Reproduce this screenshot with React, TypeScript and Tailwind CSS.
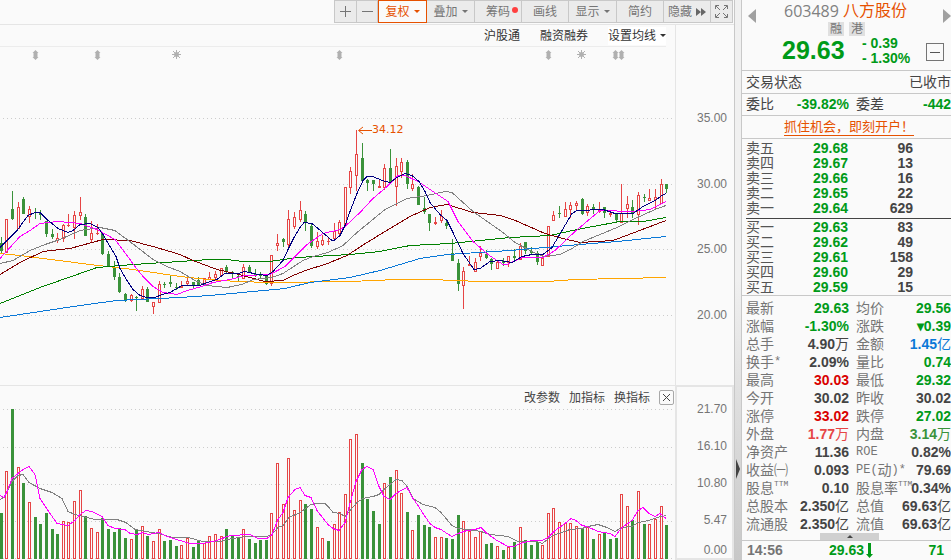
import React from "react";

type Kind = "r" | "g";
type Candle = [Kind, number, number, number, number];

const RED = "#e64545";
const GREEN = "#3a923a";

// kind, high, body top, body bottom, low
const candles: Candle[] = [
  ["g", 237, 243, 251, 253], ["r", 219, 219, 253, 253], ["g", 191, 209, 219, 220], ["r", 202, 207, 229, 229],
  ["g", 197, 199, 214, 214], ["r", 206, 209, 217, 223], ["g", 208, 212, 213, 219], ["g", 210, 213, 215, 220],
  ["g", 221, 221, 234, 237], ["g", 229, 234, 237, 239], ["r", 233, 238, 241, 243], ["r", 224, 225, 239, 242],
  ["r", 214, 225, 226, 227], ["r", 211, 215, 228, 239], ["r", 197, 212, 216, 220], ["g", 214, 217, 236, 236],
  ["r", 221, 233, 240, 243], ["r", 224, 233, 234, 235], ["g", 232, 233, 254, 255], ["g", 251, 254, 266, 266],
  ["g", 261, 267, 277, 280], ["g", 273, 277, 292, 293], ["g", 293, 294, 301, 302], ["r", 294, 295, 301, 302],
  ["g", 296, 297, 298, 311], ["r", 286, 289, 299, 299], ["g", 287, 289, 302, 302], ["r", 302, 302, 307, 314],
  ["r", 281, 284, 303, 303], ["g", 282, 284, 285, 288], ["g", 276, 282, 284, 287], ["g", 283, 287, 288, 290],
  ["r", 281, 286, 288, 288], ["r", 275, 281, 284, 286], ["g", 282, 282, 286, 288], ["g", 277, 280, 285, 285],
  ["r", 278, 278, 286, 286], ["r", 272, 277, 280, 280], ["r", 271, 274, 278, 280], ["r", 268, 268, 276, 276],
  ["g", 265, 267, 271, 274], ["g", 271, 272, 273, 279], ["g", 273, 276, 277, 281], ["r", 264, 267, 279, 279],
  ["g", 265, 267, 272, 272], ["g", 269, 274, 275, 277], ["g", 272, 275, 276, 278], ["g", 276, 276, 284, 285],
  ["r", 255, 255, 284, 286], ["r", 234, 243, 246, 251], ["g", 238, 239, 242, 247], ["r", 210, 219, 245, 249],
  ["r", 212, 217, 227, 229], ["r", 201, 210, 220, 222], ["g", 211, 214, 222, 231], ["g", 224, 226, 246, 248],
  ["r", 232, 241, 247, 249], ["r", 235, 240, 245, 246], ["r", 238, 241, 242, 245], ["r", 223, 231, 239, 241],
  ["r", 220, 222, 234, 236], ["r", 187, 187, 225, 225], ["r", 167, 171, 188, 194], ["r", 130, 154, 176, 191],
  ["g", 143, 158, 181, 182], ["g", 179, 180, 183, 191], ["g", 180, 180, 184, 191], ["r", 180, 186, 188, 188],
  ["r", 164, 168, 188, 190], ["g", 149, 168, 183, 184], ["r", 158, 166, 187, 206], ["r", 158, 162, 172, 178],
  ["g", 160, 162, 184, 189], ["r", 174, 184, 189, 191], ["g", 186, 187, 205, 205], ["g", 197, 208, 212, 214],
  ["g", 214, 214, 223, 231], ["r", 217, 222, 224, 225], ["r", 210, 216, 221, 223], ["g", 220, 223, 226, 229],
  ["g", 239, 253, 261, 261], ["g", 259, 263, 284, 291], ["r", 267, 271, 286, 309], ["r", 256, 264, 266, 266],
  ["r", 258, 262, 272, 272], ["r", 246, 253, 257, 261], ["g", 250, 254, 258, 259], ["g", 258, 259, 264, 270],
  ["r", 260, 262, 269, 269], ["g", 258, 261, 263, 266], ["r", 256, 256, 263, 267], ["g", 249, 256, 258, 261],
  ["r", 243, 246, 260, 260], ["g", 242, 242, 251, 254], ["g", 247, 251, 253, 254], ["g", 251, 253, 262, 265],
  ["r", 255, 258, 266, 266], ["r", 226, 226, 257, 257], ["r", 211, 215, 221, 221], ["g", 206, 213, 214, 218],
  ["r", 202, 209, 217, 217], ["r", 202, 205, 210, 218], ["r", 201, 203, 206, 210], ["g", 198, 199, 214, 215],
  ["r", 204, 206, 213, 216], ["g", 204, 207, 209, 214], ["r", 202, 209, 212, 213], ["g", 207, 207, 213, 218],
  ["r", 211, 213, 215, 217], ["g", 213, 214, 220, 222], ["r", 184, 213, 223, 223], ["r", 196, 204, 209, 218],
  ["g", 200, 207, 213, 218], ["r", 192, 195, 215, 225], ["g", 194, 197, 198, 202], ["r", 189, 198, 201, 201],
  ["r", 189, 197, 200, 210], ["r", 179, 184, 204, 204], ["g", 184, 184, 189, 193],
];

const volumeTops = [
  513, 471, 409, 467, 483, 502, 517, 524, 513, 529, 534, 521, 522, 501, 490, 516, 528, 532, 518, 529,
  532, 528, 538, 539, 530, 526, 536, 541, 529, 541, 540, 546, 545, 538, 547, 541, 543, 536, 534, 536,
  529, 535, 538, 529, 539, 543, 540, 540, 513, 463, 504, 458, 510, 500, 504, 509, 527, 538, 541, 524,
  512, 494, 439, 434, 463, 499, 511, 524, 483, 477, 470, 493, 512, 530, 515, 525, 527, 537, 537, 538,
  539, 515, 521, 531, 537, 531, 544, 543, 546, 550, 547, 542, 527, 540, 545, 542, 545, 513, 508, 522,
  523, 523, 526, 529, 527, 539, 534, 532, 539, 538, 494, 506, 520, 491, 524, 524, 519, 506, 525,
];

// Days on which the volume bar is coloured by the previous close, not by the candle body
const volumeKind: Record<number, Kind> = { 10: "g", 50: "r", 58: "g", 67: "g", 99: "r", 106: "r", 108: "g" };

const priceLines: { color: string; points: string }[] = [
  { color: "#ffa500", points: "0,253 20,255 90,264 133,269 180,276 207,279 237,281 270,282 350,281 397,279 430,279 480,281 547,281 575,279 666,277" },
  { color: "#0a78d7", points: "0,317 80,305 117,300 180,297 210,295 285,288 310,282 350,277 380,270 420,258 447,254 510,250 580,244 617,241 666,236" },
  { color: "#008000", points: "0,303 40,287 97,267 133,264 180,261 210,259 227,259 243,261 270,261 297,257 350,254 380,251 410,245 450,243 510,237 550,235 577,229 620,221 643,221 666,217" },
  { color: "#800000", points: "0,274 20,262 43,251 70,248 103,239 130,240 153,246 180,254 193,260 217,269 235,273 265,281 283,280 293,275 308,269 325,264 347,255 367,242 390,228 410,216 430,207 447,204 473,212 500,215 513,219 545,233 563,238 580,242 613,240 637,231 666,220" },
  { color: "#808080", points: "0,263 13,260 30,250 45,244 60,239 80,230 100,227 115,230 135,245 153,259 167,266 180,271 195,280 207,285 227,287 242,284 253,279 272,277 283,273 303,260 313,256 328,252 343,245 357,232 385,209 407,198 427,195 445,191 452,192 473,211 503,232 515,242 532,251 543,256 560,254 572,248 583,241 600,234 617,227 633,219 655,209 666,205" },
  { color: "#ff00ff", points: "0,258 20,236 30,230 40,223 58,221 80,223 97,229 115,239 127,255 135,266 143,276 153,286 163,292 177,294 187,290 202,286 213,282 230,279 245,275 270,274 285,266 307,244 323,233 340,229 345,226 360,212 373,198 387,186 398,175 405,175 418,181 433,191 448,201 458,221 473,241 488,254 503,264 507,264 522,257 543,257 555,250 575,231 600,210 633,211 650,209 666,201" },
  { color: "#000080", points: "0,247 17,230 28,215 35,212 40,212 47,219 52,223 58,228 68,232 73,230 80,224 90,223 98,227 103,234 110,246 116,256 120,268 127,280 133,289 140,295 147,297 155,297 162,294 170,292 182,285 200,285 207,282 217,279 225,273 238,273 245,271 258,274 267,275 273,271 283,260 288,249 294,237 300,227 304,222 312,223 318,228 325,234 332,240 334,240 340,235 345,225 350,211 357,193 363,180 367,176 373,176 382,180 390,182 397,177 405,173 412,175 419,181 425,191 430,202 440,214 447,220 453,232 463,253 474,269 480,268 490,261 500,260 512,262 522,256 532,254 543,254 552,247 562,230 572,213 577,210 603,209 615,213 633,213 643,206 655,200 662,195 666,193" },
];

const volumeLines: { color: string; points: string }[] = [
  { color: "#808080", points: "0,499 5,496 12,481 18,475 23,474 29,482 40,488 52,492 62,498 68,511 75,514 95,519 117,519 126,522 135,529 158,533 173,537 188,537 203,541 220,541 232,538 247,536 267,536 272,534 278,527 283,525 289,517 300,512 311,504 318,503 325,503 329,507 333,512 340,513 345,516 357,502 363,498 373,496 379,494 384,489 396,479 402,480 407,486 413,498 423,504 435,507 441,512 452,525 458,528 467,529 481,531 490,534 508,536 518,541 537,541 542,543 553,535 570,529 582,528 588,526 598,524 607,527 615,531 622,527 632,526 638,522 649,520 657,517 666,515" },
  { color: "#ff00ff", points: "0,495 4,497 7,491 12,478 18,473 23,469 29,466 35,474 40,498 48,510 57,523 68,525 75,520 80,514 86,510 92,511 102,516 108,525 115,528 125,529 130,533 137,534 143,532 148,534 159,532 167,536 180,540 190,543 203,543 217,540 230,535 250,534 258,538 267,538 272,534 278,519 283,512 288,497 295,489 300,487 305,495 311,497 317,510 328,524 333,528 339,530 345,522 350,503 356,481 362,469 367,466 373,469 379,486 384,496 390,499 396,493 401,490 407,487 413,498 418,505 425,516 430,523 435,527 441,529 447,533 452,536 458,533 467,530 475,529 481,527 487,533 497,540 508,546 514,546 520,543 532,540 542,540 548,537 555,530 565,523 571,518 576,520 582,525 587,526 598,531 610,533 615,536 622,527 632,520 638,510 643,507 649,513 655,516 660,513 666,518" },
];

const dayX = (i: number) => Math.floor(1.28 + 5.64 * i);

function GridLine({ y }: { y: number }) {
  return <line x1={3} x2={675} y1={y + 0.5} y2={y + 0.5} stroke="#cccccc" strokeDasharray="1 3" />;
}

function UpDownMark({ x }: { x: number }) {
  return <path d={`M${x + 0.5} 50l3 3h-1v4h1l-3 3l-3-3h1v-4h-1z`} fill="#b0b0b0" />;
}

function SunMark({ x }: { x: number }) {
  return (
    <g stroke="#b0b0b0" fill="#b0b0b0">
      <circle cx={x + 0.5} cy={54.5} r={2} />
      <path d={`M${x + 0.5} 50v9M${x - 4} 54.5h9M${x - 3} 51l7 7M${x + 4} 51l-7 7`} />
    </g>
  );
}

function PriceChart() {
  return (
    <svg viewBox="0 47 675 338" preserveAspectRatio="none" className="block h-[338px] w-full" role="img" aria-label="K线">
      {[35, 97, 339, 548, 615, 621].map((x) => <UpDownMark key={x} x={x} />)}
      {[176, 581].map((x) => <SunMark key={x} x={x} />)}
      <g shapeRendering="crispEdges" fill="none">
        {[118, 184, 249, 315].map((y) => <GridLine key={y} y={y} />)}
        {candles.map(([kind, high, top, bottom, low], i) => {
          const x = dayX(i);
          const h = Math.max(bottom - top, 1);
          return kind === "g" ? (
            <g key={i} fill={GREEN}>
              <rect x={x} y={high} width={1} height={low - high} />
              <rect x={x - 1} y={top} width={3} height={h} />
            </g>
          ) : (
            <g key={i} fill={RED}>
              <rect x={x} y={high} width={1} height={top - high} />
              <rect x={x} y={bottom} width={1} height={low - bottom} />
              <rect x={x - 1} y={top} width={3} height={h} />
              {h > 2 && <rect x={x} y={top + 1} width={1} height={h - 2} fill="#fafafa" />}
            </g>
          );
        })}
        {priceLines.map((l) => <polyline key={l.color} points={l.points} stroke={l.color} transform="translate(0 0.5)" />)}
      </g>
      <path d="M359 130.5h13M363 127l-4.500 3.500l4.500 3.500" fill="none" stroke="#e65100" />
      <text x={372} y={133} fill="#e65100" fontSize={11} className="font-['DejaVu_Sans',sans-serif]">34.12</text>
    </svg>
  );
}

function VolumeChart() {
  return (
    <svg viewBox="0 409 675 151" preserveAspectRatio="none" className="block h-[151px] w-full" role="img" aria-label="成交量">
      <g shapeRendering="crispEdges" fill="none">
        {[409, 447, 484, 521, 558].map((y) => <GridLine key={y} y={y} />)}
        {volumeTops.map((top, i) => {
          const kind = volumeKind[i] ?? candles[i][0];
          const x = dayX(i) - 1;
          return (
            <g key={i}>
              <rect x={x} y={top} width={3} height={559 - top} fill={kind === "g" ? GREEN : RED} />
              {kind === "r" && <rect x={x + 1} y={top + 1} width={1} height={557 - top} fill="#fafafa" />}
            </g>
          );
        })}
        {volumeLines.map((l) => <polyline key={l.color} points={l.points} stroke={l.color} transform="translate(0 0.5)" />)}
      </g>
    </svg>
  );
}

function Caret() {
  return <span className="h-0 w-0 border-x-[3px] border-t-[3px] border-x-transparent border-t-current" />;
}

function Tool({ label, width, caret, dot, active, children }: {
  label: string; width: string; caret?: boolean; dot?: boolean; active?: boolean; children?: React.ReactNode;
}) {
  const look = active
    ? "border border-[#e65100] bg-[#fafafa] text-[#e65100]"
    : "border-y border-r border-[#c8c8c8] bg-[#ebebeb] text-[#757575]";
  return (
    <button type="button" aria-label={label} className={`relative flex h-[23px] items-center justify-center gap-1 ${width} ${look}`}>
      {children ?? <span>{label}</span>}
      {caret && <Caret />}
      {dot && <span className="absolute top-[6px] right-[3px] h-[6px] w-[6px] rounded-full bg-[#ff4040]" />}
    </button>
  );
}

function Toolbar() {
  return (
    <div className="flex h-6 items-start justify-end pr-px text-[12px]">
      <div className="flex border-l border-[#c8c8c8]">
        <Tool label="放大" width="w-[22px]">
          <svg width="11" height="11" shapeRendering="crispEdges"><path d="M5.500 0v11M0 5.500h11" stroke="#757575" /></svg>
        </Tool>
        <Tool label="缩小" width="w-[21px]">
          <svg width="11" height="11" shapeRendering="crispEdges"><path d="M0 5.500h11" stroke="#757575" /></svg>
        </Tool>
        <Tool label="复权" width="w-[49px]" caret active />
        <Tool label="叠加" width="w-[48px]" caret />
        <Tool label="筹码" width="w-[47px]" dot />
        <Tool label="画线" width="w-[47px]" />
        <Tool label="显示" width="w-[48px]" caret />
        <Tool label="简约" width="w-[47px]" />
        <Tool label="隐藏" width="w-[47px]">
          <span>隐藏</span>
          <svg width="10" height="8" fill="#666666"><path d="M0 0l5 4l-5 4zM5 0l5 4l-5 4z" /></svg>
        </Tool>
        <Tool label="全屏" width="w-[22px]">
          <svg width="13" height="13" fill="none" stroke="#757575">
            <path d="M.5 4V.5H4M9 .5h3.500V4M12.500 9v3.500H9M4 12.500H.5V9M1 1l4 4M12 1L8 5M12 12L8 8M1 12l4-4" />
          </svg>
        </Tool>
      </div>
    </div>
  );
}

type Tone = "green" | "red" | "dark" | "blue" | "softRed" | "softGreen";
const tones: Record<Tone, string> = {
  green: "text-[#009a18]",
  red: "text-[#d90000]",
  dark: "text-[#444444]",
  blue: "text-[#0a78d7]",
  softRed: "text-[#e64545]",
  softGreen: "text-[#3a923a]",
};

const asks = [["卖五", "29.68", "96"], ["卖四", "29.67", "13"], ["卖三", "29.66", "16"], ["卖二", "29.65", "22"], ["卖一", "29.64", "629"]];
const bids = [["买一", "29.63", "83"], ["买二", "29.62", "49"], ["买三", "29.61", "158"], ["买四", "29.60", "29"], ["买五", "29.59", "15"]];

type Cell = { label: React.ReactNode; value: string; unit?: string; tone: Tone };
const ttm = <span className="self-start font-['Liberation_Mono',monospace] text-[8px] leading-[9px]">TTM</span>;
const latin = (text: string) => <span className="font-['Liberation_Mono',monospace] text-[12px]">{text}</span>;

const details: [Cell, Cell][] = [
  [{ label: "最新", value: "29.63", tone: "green" }, { label: "均价", value: "29.56", tone: "green" }],
  [{ label: "涨幅", value: "-1.30%", tone: "green" }, { label: "涨跌", value: "▾0.39", tone: "green" }],
  [{ label: "总手", value: "4.90", unit: "万", tone: "dark" }, { label: "金额", value: "1.45", unit: "亿", tone: "blue" }],
  [{ label: <>换手{latin("*")}</>, value: "2.09%", tone: "dark" }, { label: "量比", value: "0.74", tone: "green" }],
  [{ label: "最高", value: "30.03", tone: "red" }, { label: "最低", value: "29.32", tone: "green" }],
  [{ label: "今开", value: "30.02", tone: "dark" }, { label: "昨收", value: "30.02", tone: "dark" }],
  [{ label: "涨停", value: "33.02", tone: "red" }, { label: "跌停", value: "27.02", tone: "green" }],
  [{ label: "外盘", value: "1.77", unit: "万", tone: "softRed" }, { label: "内盘", value: "3.14", unit: "万", tone: "softGreen" }],
  [{ label: "净资产", value: "11.36", tone: "dark" }, { label: latin("ROE"), value: "0.82%", tone: "dark" }],
  [{ label: "收益㈠", value: "0.093", tone: "dark" }, { label: <>{latin("PE(")}动{latin(")*")}</>, value: "79.69", tone: "dark" }],
  [{ label: <>股息{ttm}</>, value: "0.10", tone: "dark" }, { label: <>股息率{ttm}</>, value: "0.34%", tone: "dark" }],
  [{ label: "总股本", value: "2.350", unit: "亿", tone: "dark" }, { label: "总值", value: "69.63", unit: "亿", tone: "dark" }],
  [{ label: "流通股", value: "2.350", unit: "亿", tone: "dark" }, { label: "流值", value: "69.63", unit: "亿", tone: "dark" }],
];

function QuoteRows({ rows }: { rows: string[][] }) {
  return (
    <tbody>
      {rows.map(([name, price, size]) => (
        <tr key={name} className="h-[15px] leading-[15px]">
          <th scope="row" className="w-[42px] p-0 text-left font-normal text-[#555555]">{name}</th>
          <td className="w-[60px] p-0 text-right font-bold text-[#009a18]">{price}</td>
          <td className="w-[65px] p-0 text-right font-bold text-[#444444]">{size}</td>
          <td className="p-0" />
        </tr>
      ))}
    </tbody>
  );
}

function DetailCells({ cell, indent }: { cell: Cell; indent?: boolean }) {
  return (
    <>
      <th scope="row" className={`w-[48px] p-0 text-left font-normal text-[#757575] ${indent ? "pl-[7px]" : ""}`}>
        <div className="flex h-[18px] items-center">{cell.label}</div>
      </th>
      <td className={`p-0 font-bold ${indent ? "" : "w-[55px]"} ${tones[cell.tone]}`}>
        <div className="flex h-[18px] items-center justify-end">
          {cell.value}
          {cell.unit && <span className="font-normal">{cell.unit}</span>}
        </div>
      </td>
    </>
  );
}

function QuotePanel() {
  return (
    <aside className="flex w-[210px] shrink-0 flex-col overflow-hidden border-l border-[#c8c8c8] bg-[#fafafa] text-[14px] whitespace-nowrap">
      <header className="flex h-[71px] items-start justify-between border-b border-[#c8c8c8] pl-[6px]">
        <button type="button" aria-label="上一只" className="mt-[9px] h-0 w-0 border-y-[7px] border-r-[8px] border-y-transparent border-r-[#a0a0a0]" />
        <div className="flex flex-1 flex-col pl-[26px]">
          <h1 className="flex h-[22px] items-center gap-1 pl-[2px] text-[16px]">
            <span className="font-['Open_Sans',sans-serif] text-[#808080]">603489</span>
            <span className="text-[#e65100]">八方股份</span>
          </h1>
          <div className="flex gap-[5px] pl-[46px] text-[12px] leading-[14px] text-[#757575]">
            <span className="w-4 bg-[#e0e0e0] text-center">融</span>
            <span className="w-4 bg-[#e0e0e0] text-center">港</span>
          </div>
          <div className="flex text-[#009a18]">
            <strong className="w-[80px] text-[25px] leading-[28px]">29.63</strong>
            <div className="flex flex-col font-bold leading-[15px]">
              <span>- 0.39</span>
              <span>- 1.30%</span>
            </div>
          </div>
        </div>
        <div className="flex w-[25px] flex-col items-end gap-5">
          <button type="button" aria-label="下一只" className="mt-[9px] h-0 w-0 border-y-[7px] border-l-[8px] border-y-transparent border-l-[#a0a0a0]" />
          <button type="button" aria-label="移出自选" className="mr-[7px] flex h-[18px] w-[18px] items-center justify-center border border-[#757575]">
            <span className="h-px w-[10px] bg-[#555555]" />
          </button>
        </div>
      </header>
      <div className="flex h-[23px] items-center justify-between border-b border-[#c8c8c8] pl-1 text-[#444444]">
        <span>交易状态</span>
        <span>已收市</span>
      </div>
      <div className="flex h-[22px] items-center border-b border-[#c8c8c8] pl-1 text-[#444444]">
        <span>委比</span>
        <span className="w-[75px] text-right font-bold text-[#009a18]">-39.82%</span>
        <span className="pl-[7px]">委差</span>
        <span className="flex-1 text-right font-bold text-[#009a18]">-442</span>
      </div>
      <div className="flex h-[23px] items-center border-b border-[#c8c8c8] pl-[42px]">
        <a href="#open" className="border-b border-[#e65100] text-[13px] leading-4 text-[#e65100]">抓住机会，即刻开户！</a>
      </div>
      <div className="border-b border-[#c8c8c8] pl-1">
        <table className="mt-[2px] w-full table-fixed border-collapse"><QuoteRows rows={asks} /></table>
        <div className="mt-[2px] h-px bg-[#444444]" />
        <table className="mt-px w-full table-fixed border-collapse"><QuoteRows rows={bids} /></table>
      </div>
      <table className="mt-[3px] ml-1 w-[205px] table-fixed border-collapse">
        <tbody>
          {details.map(([a, b], i) => (
            <tr key={i} className="h-[18px] leading-[18px]">
              <DetailCells cell={a} />
              <DetailCells cell={b} indent />
            </tr>
          ))}
        </tbody>
      </table>
      <button type="button" aria-label="收起" className="ml-[78px] flex h-[7px] w-[59px] items-center justify-center bg-[#d0d0d0]">
        <span className="h-0 w-0 border-x-[3px] border-b-[3px] border-x-transparent border-b-[#444444]" />
      </button>
      <div className="flex h-[19px] items-center border-t border-[#c8c8c8] pr-[7px] pl-[5px] leading-4 font-bold">
        <span className="w-[82px] text-[#757575]">14:56</span>
        <span className="flex flex-1 items-center gap-[2px] text-[#009a18]">
          29.63
          <svg width="7" height="15" fill="#009a18"><path d="M2 0h3v11h2l-3.500 4L0 11h2z" /></svg>
        </span>
        <span className="text-[#009a18]">71</span>
      </div>
    </aside>
  );
}

export default function App() {
  return (
    <div className="flex min-h-screen overflow-hidden bg-[#fafafa] font-['Liberation_Sans','Noto_Sans_CJK_SC',sans-serif]">
      <main className="flex min-w-0 flex-1 flex-col border-r border-[#c8c8c8]">
        <Toolbar />
        <div className="flex border-t border-[#e5e5e5]">
          <section className="min-w-0 flex-1">
            <div className="mr-[9px] flex h-[22px] items-center justify-end gap-5 border-b border-[#ececec] text-[12px] text-[#333333]">
              <button type="button">沪股通</button>
              <button type="button">融资融券</button>
              <button type="button" className="flex items-center gap-1 bg-white"><span>设置均线</span><Caret /></button>
            </div>
            <PriceChart />
          </section>
          <div className="flex w-[59px] flex-col items-end justify-between border-l border-[#e5e5e5] pt-[85px] pr-[7px] pb-[62px] text-[12px] leading-4 text-[#757575]">
            <span>35.00</span>
            <span>30.00</span>
            <span>25.00</span>
            <span>20.00</span>
          </div>
        </div>
        <div className="flex">
          <section className="min-w-0 flex-1 border-t border-[#e5e5e5]">
            <div className="flex h-[23px] items-center justify-end gap-[9px] pr-px text-[12px] text-[#444444]">
              <button type="button">改参数</button>
              <button type="button">加指标</button>
              <button type="button">换指标</button>
              <button type="button" aria-label="关闭" className="flex h-[15px] w-[15px] items-center justify-center rounded-[2px] border border-[#a8a8a8]">
                <svg width="9" height="9" stroke="#444444"><path d="M1 1l7 7M8 1l-7 7" /></svg>
              </button>
            </div>
            <VolumeChart />
          </section>
          <div className="flex w-[59px] flex-col items-end gap-[21px] border-2 border-[#e5e5e5] pt-[14px] pr-[5px] text-[12px] leading-4 text-[#757575]">
            <span>21.70</span>
            <span>16.10</span>
            <span>10.80</span>
            <span className="-mb-[7px]">5.47</span>
            <span>0.00</span>
          </div>
        </div>
      </main>
      <div className="flex w-[6px] shrink-0 flex-col bg-linear-to-b from-[#f0f0f0] from-50% to-[#c8c8c8]">
        <button type="button" aria-label="展开侧栏" className="mt-[459px] ml-[1px] h-0 w-0 border-y-[10px] border-l-[4px] border-y-transparent border-l-[#444444]" />
      </div>
      <QuotePanel />
    </div>
  );
}
